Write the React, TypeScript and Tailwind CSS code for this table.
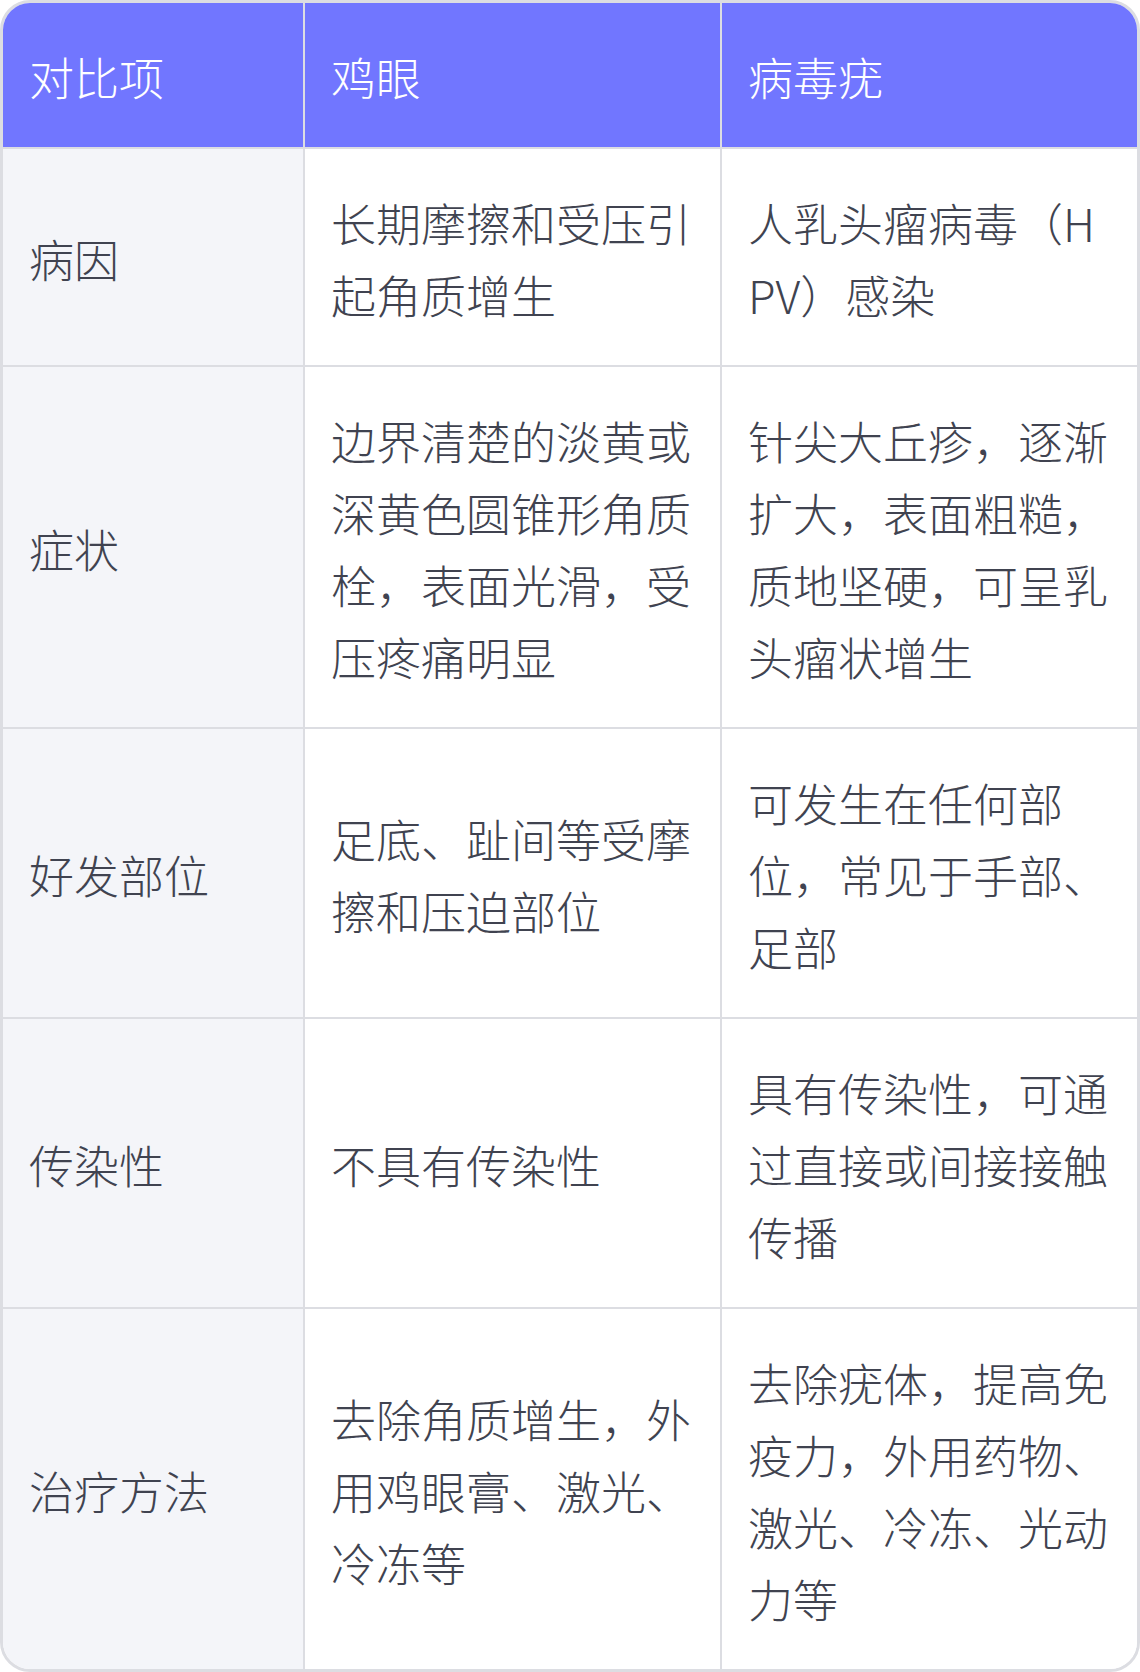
const rows = [
  {
    label: "病因",
    corn: "长期摩擦和受压引起角质增生",
    wart: "人乳头瘤病毒（HPV）感染",
  },
  {
    label: "症状",
    corn: "边界清楚的淡黄或深黄色圆锥形角质栓，表面光滑，受压疼痛明显",
    wart: "针尖大丘疹，逐渐扩大，表面粗糙，质地坚硬，可呈乳头瘤状增生",
  },
  {
    label: "好发部位",
    corn: "足底、趾间等受摩擦和压迫部位",
    wart: "可发生在任何部位，常见于手部、足部",
  },
  {
    label: "传染性",
    corn: "不具有传染性",
    wart: "具有传染性，可通过直接或间接接触传播",
  },
  {
    label: "治疗方法",
    corn: "去除角质增生，外用鸡眼膏、激光、冷冻等",
    wart: "去除疣体，提高免疫力，外用药物、激光、冷冻、光动力等",
  },
]

const App = () => {
  return (
    <div
      className="w-[1140px] bg-white"
      style={{ fontFamily: '"Noto Sans CJK SC", "Noto Sans", sans-serif' }}
    >
      <div className="border-[3px] border-[#dcdde2] rounded-[30px] overflow-hidden">
        <div className="grid grid-cols-[302px_417px_1fr] text-[45px] leading-[72px] font-light break-all">
          {/* header */}
          <div className="bg-[#7176ff] text-white border-r-2 border-b-2 border-[#dcdde2] pl-[26px] pr-[20px] pt-[38px] pb-[34px]">
            对比项
          </div>
          <div className="bg-[#7176ff] text-white border-r-2 border-b-2 border-[#dcdde2] pl-[26px] pr-[20px] pt-[38px] pb-[34px]">
            鸡眼
          </div>
          <div className="bg-[#7176ff] text-white border-b-2 border-[#dcdde2] pl-[26px] pr-[20px] pt-[38px] pb-[34px]">
            病毒疣
          </div>

          {rows.map((row, i) => {
            const last = i === rows.length - 1
            return (
              <div key={row.label} className="contents text-[#404350]">
                <div
                  className={`bg-[#f4f5f9] border-r-2 border-[#dcdde2] flex items-center pl-[26px] pr-[20px] pt-[38px] pb-[34px] ${
                    last ? "" : "border-b-2"
                  }`}
                >
                  {row.label}
                </div>
                <div
                  className={`bg-white border-r-2 border-[#dcdde2] flex items-center pl-[26px] pr-[20px] pt-[38px] pb-[34px] ${
                    last ? "" : "border-b-2"
                  }`}
                >
                  <span>{row.corn}</span>
                </div>
                <div
                  className={`bg-white border-[#dcdde2] flex items-center pl-[26px] pr-[20px] pt-[38px] pb-[34px] ${
                    last ? "" : "border-b-2"
                  }`}
                >
                  <span>{row.wart}</span>
                </div>
              </div>
            )
          })}
        </div>
      </div>
    </div>
  )
}

export default App
